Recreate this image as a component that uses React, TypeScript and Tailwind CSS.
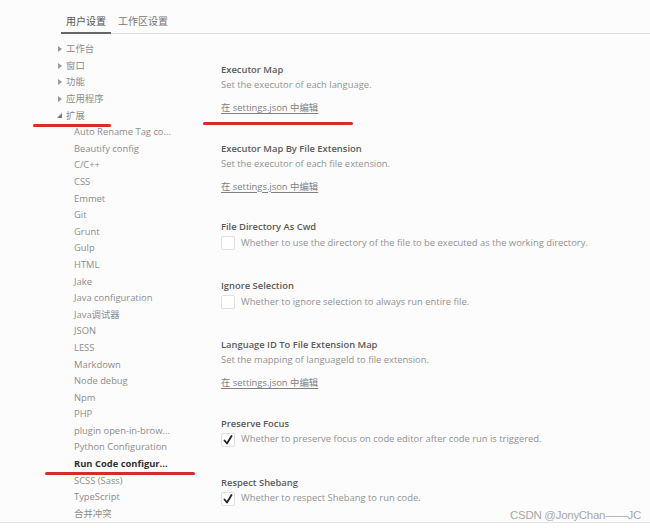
import React from 'react';

type Setting =
  | { kind: 'link'; title: string; desc: string }
  | { kind: 'check'; title: string; desc: string; checked: boolean };

const groups = ['工作台', '窗口', '功能', '应用程序'];

const extensions = [
  'Auto Rename Tag co...',
  'Beautify config',
  'C/C++',
  'CSS',
  'Emmet',
  'Git',
  'Grunt',
  'Gulp',
  'HTML',
  'Jake',
  'Java configuration',
  'Java调试器',
  'JSON',
  'LESS',
  'Markdown',
  'Node debug',
  'Npm',
  'PHP',
  'plugin open-in-brow...',
  'Python Configuration',
  'Run Code configur...',
  'SCSS (Sass)',
  'TypeScript',
  '合并冲突',
];

const settings: Setting[] = [
  { kind: 'link', title: 'Executor Map', desc: 'Set the executor of each language.' },
  { kind: 'link', title: 'Executor Map By File Extension', desc: 'Set the executor of each file extension.' },
  { kind: 'check', title: 'File Directory As Cwd', desc: 'Whether to use the directory of the file to be executed as the working directory.', checked: false },
  { kind: 'check', title: 'Ignore Selection', desc: 'Whether to ignore selection to always run entire file.', checked: false },
  { kind: 'link', title: 'Language ID To File Extension Map', desc: 'Set the mapping of languageId to file extension.' },
  { kind: 'check', title: 'Preserve Focus', desc: 'Whether to preserve focus on code editor after code run is triggered.', checked: true },
  { kind: 'check', title: 'Respect Shebang', desc: 'Whether to respect Shebang to run code.', checked: true },
];

const Caret: React.FC<{ open?: boolean }> = ({ open }) => (
  <span className="w-[7px] flex items-center justify-center">
    {open ? (
      <svg width="5" height="5" viewBox="0 0 5 5">
        <path d="M5 0 L5 5 L0 5 Z" fill="#777" />
      </svg>
    ) : (
      <svg width="4" height="6" viewBox="0 0 4 6">
        <path d="M0 0 L4 3 L0 6 Z" fill="#999" />
      </svg>
    )}
  </span>
);

const Checkbox: React.FC<{ checked: boolean }> = ({ checked }) => (
  <span className="w-[14px] h-[14px] border border-[#e0e0e0] rounded-[2px] bg-white flex items-center justify-center shrink-0">
    {checked && (
      <svg width="10" height="10" viewBox="0 0 10 10">
        <path d="M1.5 5.5 L4 8.5 L8.5 1" stroke="#222" strokeWidth="1.8" fill="none" strokeLinecap="round" strokeLinejoin="round" />
      </svg>
    )}
  </span>
);

const App: React.FC = () => {
  return (
    <div
      className="relative w-[650px] h-[528px] bg-[#fcfcfc] overflow-hidden text-[9.4px]"
      style={{ fontFamily: '"Open Sans", "Noto Sans CJK SC", sans-serif' }}
    >
      {/* tabs */}
      <div className="flex items-end h-[34px] pl-[61px] text-[10px]">
        <div className="h-[21px] px-[5px] border-b-2 border-[#666] text-[#555] leading-[16px]">用户设置</div>
        <div className="flex-1 h-[21px] pl-[7px] border-b border-[#e0e0e0] text-[#777] leading-[16px]">工作区设置</div>
      </div>

      <div className="flex">
        {/* tree */}
        <div className="w-[221px] pl-[56px] pt-[7px] text-[#8c8c8c]">
          {groups.map(g => (
            <div key={g} className="flex items-center h-[16.6px] gap-[3px]">
              <Caret />
              <span>{g}</span>
            </div>
          ))}
          <div className="flex items-center h-[16.6px] gap-[3px]">
            <Caret open />
            <span>扩展</span>
          </div>
          {extensions.map(e => (
            <div
              key={e}
              className={`flex items-center h-[16.6px] pl-[18px] whitespace-nowrap ${
                e.startsWith('Run Code') ? 'font-bold text-[#333]' : ''
              }`}
            >
              {e}
            </div>
          ))}
        </div>

        {/* settings */}
        <div className="flex-1 pt-[28px]">
          {settings.map(s => (
            <div key={s.title} className={s.kind === 'link' ? 'h-[78.5px]' : 'h-[59px]'}>
              <div className="h-[15px] leading-[15px] font-semibold text-[#5a5a5a]">{s.title}</div>
              {s.kind === 'link' ? (
                <>
                  <div className="h-[15px] leading-[15px] text-[#939393]">{s.desc}</div>
                  <div className="mt-[8px] h-[15px] leading-[15px] text-[#808080] underline underline-offset-2">
                    在 settings.json 中编辑
                  </div>
                </>
              ) : (
                <div className="flex items-center gap-[6px] h-[16px] mt-[1px]">
                  <Checkbox checked={s.checked} />
                  <span className="text-[#939393] whitespace-nowrap">{s.desc}</span>
                </div>
              )}
            </div>
          ))}
        </div>
      </div>

      {/* red annotation marks */}
      <div className="absolute left-[33px] top-[124px] w-[78px] h-[2.5px] bg-[#d92b2b] rounded-full" />
      <div className="absolute left-[203px] top-[122px] w-[150px] h-[2.5px] bg-[#d92b2b] rounded-full" />
      <div className="absolute left-[45px] top-[472px] w-[150px] h-[2.5px] bg-[#d92b2b] rounded-full" />

      {/* bottom border + watermark */}
      <div className="absolute left-0 right-0 top-[522px] h-[6px] border-t border-[#e4e4e4] bg-white" />
      <div
        className="absolute right-[9px] top-[507px] text-[11.5px] text-[#a8a8a8] tracking-[-0.3px]"
        style={{ fontFamily: '"Liberation Sans", sans-serif' }}
      >
        CSDN @JonyChan——JC
      </div>
    </div>
  );
};

export default App;
